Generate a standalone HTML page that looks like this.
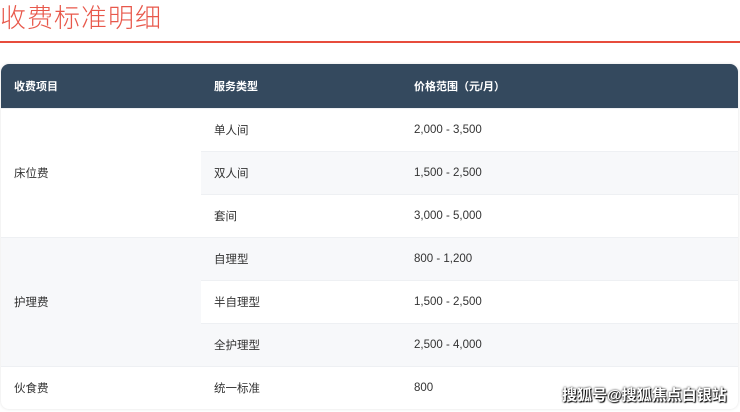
<!DOCTYPE html>
<html><head><meta charset="utf-8"><style>
body{margin:0;width:740px;height:412px;overflow:hidden;background:#fff;font-family:"Liberation Sans","Noto Sans CJK SC",sans-serif;}
h1{position:absolute;left:0;top:0;margin:0;font-weight:300;font-size:26px;line-height:34px;color:#e8584b;letter-spacing:1px;font-family:"Noto Sans CJK SC",sans-serif}
.line{position:absolute;left:0;top:41px;width:740px;height:2px;background:#e74c3c}
.wrap{position:absolute;left:1px;top:64px;width:737px;border-radius:8px;overflow:hidden;box-shadow:0 0 3px rgba(0,0,0,.12)}
table{border-collapse:collapse;width:100%;font-size:11.5px;color:#333}
th{background:#34495e;color:#fff;font-weight:bold;text-align:left;height:44px;padding:0 0 0 13px;font-size:11px}
td{height:42px;padding:0 0 0 13px;border-top:1px solid #eef0f3}
tr.g td{background:#f7f8fa}
.wm{position:absolute;left:562px;top:384px;font-size:15px;color:#fff;font-weight:bold;text-shadow:0 0 2px #000,1px 1px 1px #000}
</style></head><body>
<h1>收费标准明细</h1>
<div class="line"></div>
<div class="wrap"><table>
<tr><th style="width:187px">收费项目</th><th style="width:187px">服务类型</th><th>价格范围（元/月）</th></tr>
<tr><td rowspan="3">床位费</td><td>单人间</td><td>2,000 - 3,500</td></tr>
<tr class="g"><td>双人间</td><td>1,500 - 2,500</td></tr>
<tr><td>套间</td><td>3,000 - 5,000</td></tr>
<tr class="g"><td rowspan="3">护理费</td><td>自理型</td><td>800 - 1,200</td></tr>
<tr><td>半自理型</td><td>1,500 - 2,500</td></tr>
<tr class="g"><td>全护理型</td><td>2,500 - 4,000</td></tr>
<tr><td>伙食费</td><td>统一标准</td><td>800</td></tr>
</table></div>
<div class="wm">搜狐号@搜狐焦点白银站</div>
</body></html>
